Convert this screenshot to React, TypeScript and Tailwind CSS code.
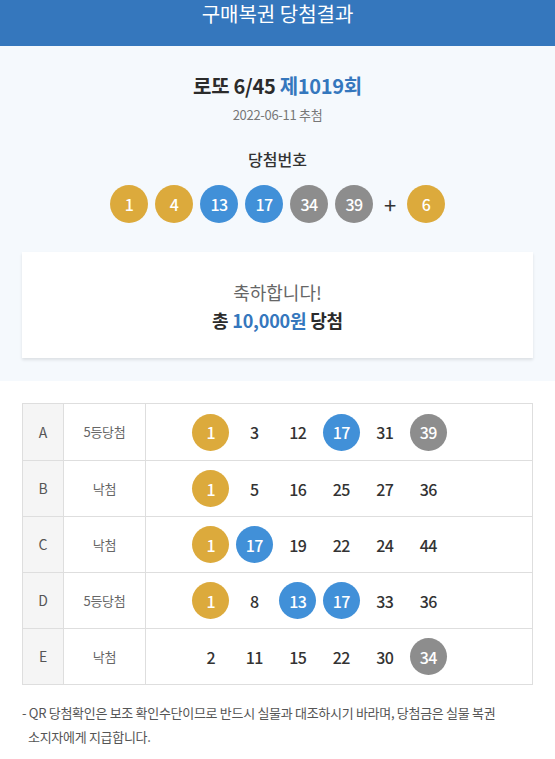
import React from 'react';

type Row = { label: string; result: string; nums: number[] };

const winning = [1, 4, 13, 17, 34, 39];
const bonus = 6;

const rows: Row[] = [
  { label: 'A', result: '5등당첨', nums: [1, 3, 12, 17, 31, 39] },
  { label: 'B', result: '낙첨', nums: [1, 5, 16, 25, 27, 36] },
  { label: 'C', result: '낙첨', nums: [1, 17, 19, 22, 24, 44] },
  { label: 'D', result: '5등당첨', nums: [1, 8, 13, 17, 33, 36] },
  { label: 'E', result: '낙첨', nums: [2, 11, 15, 22, 30, 34] },
];

const ballColor = (n: number) => {
  if (n <= 10) return 'bg-[#dcaa3c]';
  if (n <= 20) return 'bg-[#4190d8]';
  if (n <= 30) return 'bg-[#e0605a]';
  if (n <= 40) return 'bg-[#8d8d8d]';
  return 'bg-[#8fc25a]';
};

const Ball: React.FC<{ n: number; size?: string }> = ({ n, size = 'w-[38px] h-[38px]' }) => (
  <span className={`${size} ${ballColor(n)} rounded-full flex items-center justify-center text-white text-[16px] font-medium tracking-[-0.5px]`}>
    {n}
  </span>
);

const App: React.FC = () => {
  return (
    <div className="w-[555px] min-h-[759px] bg-white text-[#333] font-['Noto_Sans_CJK_KR','Noto_Sans',sans-serif]">
      <div className="h-[46px] bg-[#3577bd] flex justify-center">
        <span className="text-white text-[20px] leading-[28px]">구매복권 당첨결과</span>
      </div>

      <div className="bg-[#f5f9fd] pt-[26px] pb-[23px] px-[22px] flex flex-col items-center">
        <h1 className="text-[20px] leading-[28px] font-bold text-[#2b2b2b] tracking-[-0.3px]">
          로또 6/45 <span className="text-[#3577bd]">제1019회</span>
        </h1>
        <p className="mt-[5px] text-[13px] leading-[20px] text-[#777] tracking-[-0.3px]">2022-06-11 추첨</p>
        <p className="mt-[22px] text-[16px] leading-[24px] font-medium text-[#333]">당첨번호</p>
        <div className="mt-[14px] flex items-center gap-[7px]">
          {winning.map((n) => (
            <Ball key={n} n={n} />
          ))}
          <span className="w-[20px] text-center text-[22px] leading-none text-[#333]">+</span>
          <Ball n={bonus} />
        </div>
        <div className="mt-[29px] w-full h-[106px] bg-white shadow-[0_2px_3px_rgba(0,0,0,0.1)] flex flex-col items-center pt-[27px]">
          <p className="text-[18px] leading-[26px] text-[#666]">축하합니다!</p>
          <p className="mt-[1px] text-[18px] leading-[28px] font-bold text-[#2b2b2b] tracking-[-0.2px]">
            총 <span className="text-[#3577bd]">10,000원</span> 당첨
          </p>
        </div>
      </div>

      <div className="px-[22px] pt-[22px]">
        <div className="border border-[#dedede]">
          {rows.map((r, i) => (
            <div key={r.label} className={`flex h-[56px] ${i > 0 ? 'border-t border-[#dedede]' : ''}`}>
              <div className="w-[41px] bg-[#f5f5f5] border-r border-[#dedede] flex items-center justify-center text-[14px] text-[#555]">
                {r.label}
              </div>
              <div className="w-[82px] border-r border-[#dedede] flex items-center justify-center text-[13px] text-[#666] tracking-[-0.3px]">
                {r.result}
              </div>
              <div className="flex-1 flex items-center pl-[43px]">
                {r.nums.map((n) => (
                  <div key={n} className="w-[43.5px] flex justify-center">
                    {winning.includes(n) ? (
                      <Ball n={n} size="w-[37px] h-[37px]" />
                    ) : (
                      <span className="text-[16px] font-medium text-[#333] tracking-[-0.5px]">{n}</span>
                    )}
                  </div>
                ))}
              </div>
            </div>
          ))}
        </div>

        <p className="mt-[16px] pl-[6px] -indent-[6px] text-[13px] leading-[24px] text-[#555] tracking-[-0.3px] break-keep">
          - QR 당첨확인은 보조 확인수단이므로 반드시 실물과 대조하시기 바라며, 당첨금은 실물 복권 소지자에게 지급합니다.
        </p>
      </div>
    </div>
  );
};

export default App;
